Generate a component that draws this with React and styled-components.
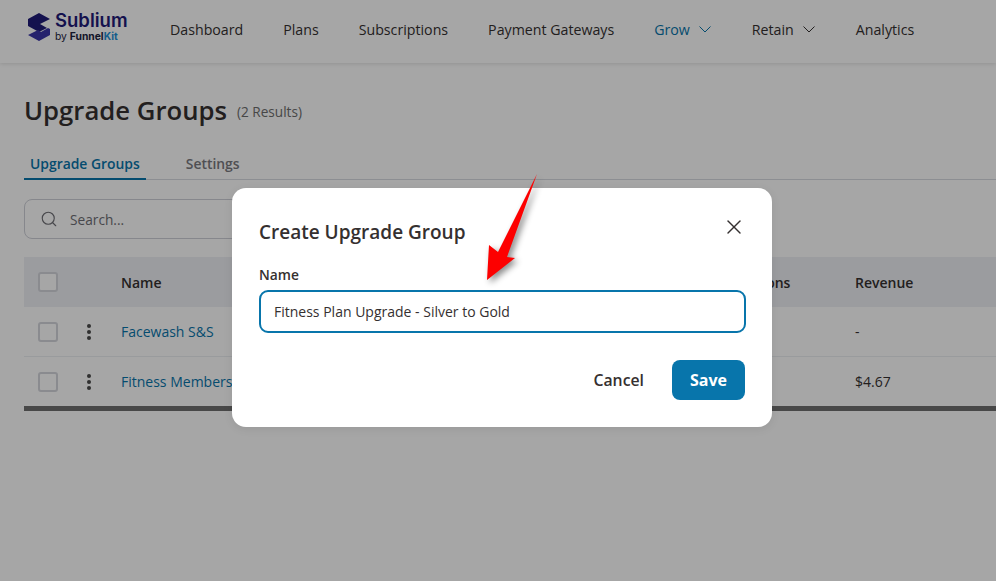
import React from "react";
import styled, { createGlobalStyle } from "styled-components";
import { Search, X } from "lucide-react";

const GlobalStyle = createGlobalStyle`
  html, body {
    margin: 0;
    height: 100%;
    overflow: hidden;
    background: #fff;
    font-family: "Open Sans", "Noto Sans", sans-serif;
  }
`;

const rows = [
  { name: "Facewash S&S", revenue: "-" },
  { name: "Fitness Membership", revenue: "$4.67" },
];

function Logo() {
  return (
    <svg width="24" height="30" viewBox="0 0 24 30">
      <path d="M1 7 L12 1 L23 7 L13 12 L20 16 L12 20 L1 14 Z" fill="#1f1b78" />
      <path d="M23 23 L12 29 L1 23 L11 18 L14 20 L21 16 L23 17 Z" fill="#3a35a8" />
    </svg>
  );
}

function Chevron() {
  return (
    <ChevronIcon width="12" height="7" viewBox="0 0 12 7">
      <path d="M.5 .5 L6 6 L11.5 .5" fill="none" stroke="currentColor" />
    </ChevronIcon>
  );
}

function App() {
  return (
    <>
      <GlobalStyle />
      <Page>
        <Header>
          <Brand>
            <Logo />
            <BrandText>
              <BrandName>Sublium</BrandName>
              <BrandSub>
                by <b>Funnel</b>
                <Kit>Kit</Kit>
              </BrandSub>
            </BrandText>
          </Brand>
          <Nav>
            <NavItem>Dashboard</NavItem>
            <NavItem>Plans</NavItem>
            <NavItem>Subscriptions</NavItem>
            <NavItem>Payment Gateways</NavItem>
            <NavItem $active>
              Grow <Chevron />
            </NavItem>
            <NavItem>
              Retain <Chevron />
            </NavItem>
            <NavItem>Analytics</NavItem>
          </Nav>
        </Header>

        <Content>
          <TitleRow>
            <Title>Upgrade Groups</Title>
            <Results>(2 Results)</Results>
          </TitleRow>

          <Tabs>
            <Tab $active>Upgrade Groups</Tab>
            <Tab>Settings</Tab>
          </Tabs>

          <SearchBox>
            <Search size={18} strokeWidth={1.5} />
            <span>Search...</span>
          </SearchBox>

          <Table>
            <HeadRow>
              <Cell>
                <Check />
              </Cell>
              <Cell />
              <Cell>Name</Cell>
              <Cell>Subscriptions</Cell>
              <Cell>Revenue</Cell>
            </HeadRow>
            {rows.map((row) => (
              <Row key={row.name}>
                <Cell>
                  <Check />
                </Cell>
                <Cell>
                  <Dots>
                    <i />
                    <i />
                    <i />
                  </Dots>
                </Cell>
                <NameCell>{row.name}</NameCell>
                <Cell />
                <Cell>{row.revenue}</Cell>
              </Row>
            ))}
          </Table>
        </Content>

        <Overlay>
          <Modal>
            <ModalTop>
              <ModalTitle>Create Upgrade Group</ModalTitle>
              <CloseBtn>
                <X size={24} strokeWidth={1.4} />
              </CloseBtn>
            </ModalTop>
            <Label>Name</Label>
            <Input readOnly value="Fitness Plan Upgrade - Silver to Gold" />
            <Actions>
              <CancelBtn>Cancel</CancelBtn>
              <SaveBtn>Save</SaveBtn>
            </Actions>
          </Modal>
        </Overlay>

        <Arrow width="70" height="120" viewBox="0 0 70 120">
          <path d="M59 2 L29 85 L37 86 L9 108 L11 73 L20 80 Z" fill="#fd0000" />
        </Arrow>
      </Page>
    </>
  );
}

const Page = styled.div`
  position: relative;
  width: 996px;
  height: 581px;
  overflow: hidden;
  background: #fff;
  color: #353030;
`;

const Header = styled.header`
  display: flex;
  align-items: center;
  box-sizing: border-box;
  height: 63px;
  padding: 0 0 5px 27px;
  background: #fff;
  box-shadow: 0 1px 4px rgba(0, 0, 0, 0.12);
`;

const Brand = styled.div`
  display: flex;
  align-items: center;
  gap: 4px;
  width: 143px;
  flex-shrink: 0;
  margin-bottom: 5px;
`;

const BrandText = styled.div`
  display: flex;
  flex-direction: column;
`;

const BrandName = styled.div`
  font-family: "Inter", sans-serif;
  font-size: 18.5px;
  line-height: 19px;
  font-weight: 600;
  color: #1f1b78;
`;

const BrandSub = styled.div`
  font-family: "Inter", sans-serif;
  font-size: 10.3px;
  line-height: 12px;
  color: #1c2340;
  b {
    font-weight: 700;
  }
`;

const Kit = styled.b`
  color: #1f8fd6;
`;

const Nav = styled.nav`
  display: flex;
  align-items: center;
  gap: 40px;
  white-space: nowrap;
`;

const NavItem = styled.a`
  display: flex;
  align-items: center;
  gap: 9px;
  font-size: 14.2px;
  color: ${(p) => (p.$active ? "#0875ab" : "#353030")};
`;

const ChevronIcon = styled.svg`
  margin-right: 1px;
`;

const Content = styled.main`
  padding: 31px 0 0 24px;
`;

const TitleRow = styled.div`
  display: flex;
  align-items: center;
  gap: 10px;
`;

const Title = styled.h1`
  margin: 0;
  padding-bottom: 2px;
  font-size: 25.7px;
  line-height: 34px;
  font-weight: 600;
  color: #353030;
`;

const Results = styled.span`
  margin-bottom: 2px;
  font-size: 13.6px;
  color: #6e6e6e;
`;

const Tabs = styled.div`
  display: flex;
  gap: 34px;
  margin-top: 23px;
  border-bottom: 1px solid #d8dae0;
`;

const Tab = styled.div`
  padding: 0 6px 3px;
  margin-bottom: -1px;
  font-size: 13.9px;
  font-weight: 600;
  line-height: 22px;
  color: ${(p) => (p.$active ? "#0875ab" : "#7a7a80")};
  border-bottom: 2px solid ${(p) => (p.$active ? "#0875ab" : "transparent")};
`;

const SearchBox = styled.div`
  display: flex;
  align-items: center;
  gap: 12px;
  width: 320px;
  height: 38px;
  margin-top: 19px;
  padding-left: 15px;
  border: 1px solid #ced0d8;
  border-radius: 8px;
  font-size: 13.7px;
  color: #6e6e74;
`;

const Table = styled.div`
  margin-top: 18px;
  border-bottom: 5px solid #6f6f6f;
`;

const HeadRow = styled.div`
  display: grid;
  grid-template-columns: 50px 47px 578px 156px 1fr;
  align-items: center;
  box-sizing: border-box;
  height: 50px;
  background: #eff0f5;
  font-size: 14px;
  font-weight: 600;
`;

const Row = styled(HeadRow)`
  height: 49px;
  background: #fff;
  font-weight: 400;
  &:last-child {
    height: 50px;
    border-top: 1px solid #eceef2;
  }
`;

const Cell = styled.div`
  display: flex;
  align-items: center;
  white-space: nowrap;
`;

const NameCell = styled(Cell)`
  color: #0875ab;
`;

const Check = styled.span`
  display: block;
  box-sizing: border-box;
  width: 20px;
  height: 20px;
  margin-left: 14px;
  border: 2px solid #d4d6dc;
  border-radius: 3px;
  background: #fff;
`;

const Dots = styled.div`
  display: flex;
  flex-direction: column;
  gap: 2px;
  margin-left: 13px;
  i {
    display: block;
    width: 4px;
    height: 4px;
    border-radius: 50%;
    background: #4a4a4a;
  }
`;

const Overlay = styled.div`
  position: absolute;
  inset: 0;
  display: flex;
  align-items: flex-start;
  justify-content: center;
  box-sizing: border-box;
  padding: 188px 0 0 8px;
  background: rgba(0, 0, 0, 0.35);
`;

const Modal = styled.div`
  box-sizing: border-box;
  width: 540px;
  height: 239px;
  padding: 30px 27px 27px;
  background: #fff;
  border-radius: 14px;
  box-shadow: 0 2px 10px rgba(0, 0, 0, 0.08);
`;

const ModalTop = styled.div`
  display: flex;
  align-items: center;
  justify-content: space-between;
  height: 28px;
`;

const ModalTitle = styled.h2`
  margin: 0;
  font-size: 19px;
  line-height: 28px;
  font-weight: 600;
  color: #353030;
`;

const CloseBtn = styled.span`
  display: flex;
  margin: 0 -1px 10px 0;
  color: #353030;
`;

const Label = styled.div`
  margin-top: 19px;
  font-size: 13.8px;
  line-height: 20px;
  font-weight: 600;
  color: #353030;
`;

const Input = styled.input`
  display: block;
  box-sizing: border-box;
  width: 487px;
  height: 43px;
  margin-top: 5px;
  padding: 0 13px;
  border: 2px solid #0875ab;
  border-radius: 9px;
  outline: none;
  font-family: inherit;
  font-size: 14px;
  color: #353030;
`;

const Actions = styled.div`
  display: flex;
  align-items: center;
  justify-content: flex-end;
  gap: 28px;
  margin-top: 27px;
  width: 486px;
`;

const CancelBtn = styled.span`
  font-size: 15.8px;
  font-weight: 600;
  color: #353030;
`;

const SaveBtn = styled.span`
  display: flex;
  align-items: center;
  justify-content: center;
  width: 73px;
  height: 40px;
  border-radius: 8px;
  background: #0875ab;
  color: #fff;
  font-size: 16px;
  font-weight: 700;
`;

const Arrow = styled.svg`
  position: absolute;
  left: 478px;
  top: 172px;
  filter: drop-shadow(3px 3px 3px rgba(0, 0, 0, 0.45));
`;

export default App;
